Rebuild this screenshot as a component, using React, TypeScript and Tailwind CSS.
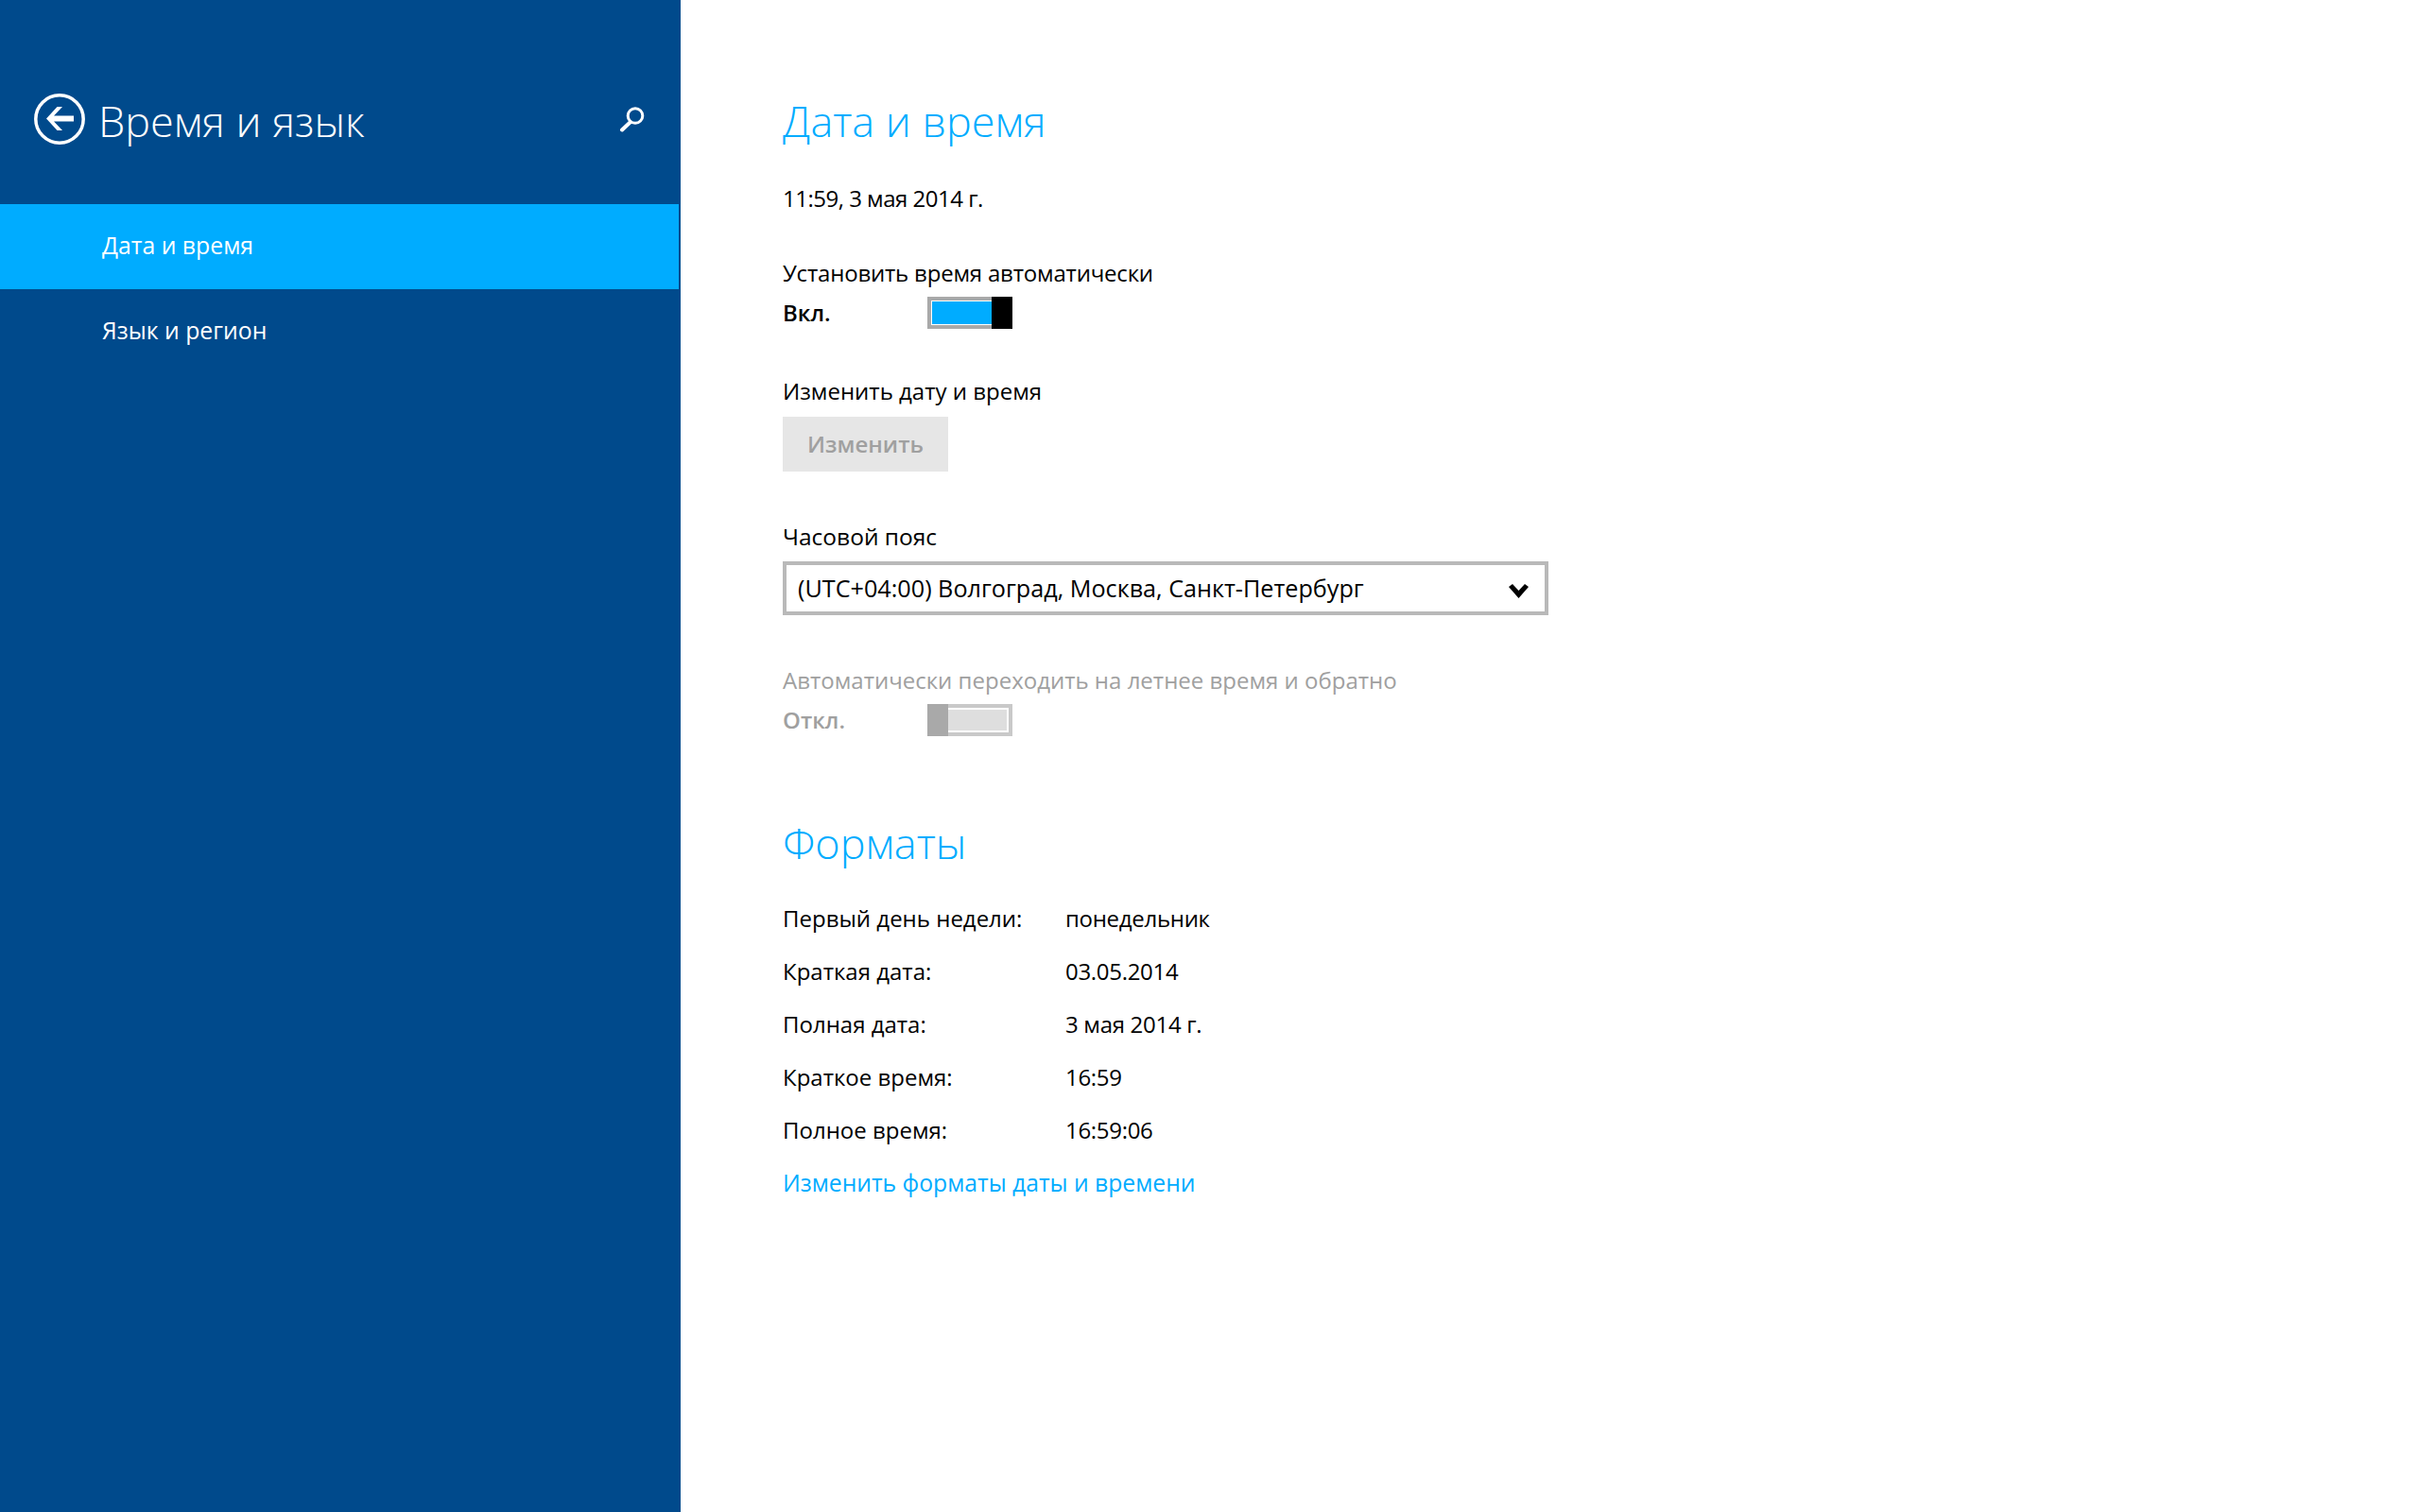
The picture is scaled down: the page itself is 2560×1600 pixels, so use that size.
function BackIcon() {
  return (
    <svg width="54" height="54" viewBox="0 0 54 54" fill="none">
      <circle cx="27" cy="27" r="25.2" stroke="white" strokeWidth="3.5" />
      <polygon fill="white" points="13,26.5 24.5,14 30,14 21,23.5 42,23.5 42,29.5 21,29.5 30,39 24.5,39" />
    </svg>
  );
}

function SearchIcon() {
  return (
    <svg width="28" height="28" viewBox="0 0 28 28" fill="none" stroke="white" strokeWidth="3">
      <circle cx="18" cy="10.5" r="7.8" />
      <path d="M12.5 17.5L4 25.5" strokeWidth="4" strokeLinecap="round" />
    </svg>
  );
}

function Toggle({ on }: { on: boolean }) {
  if (on) {
    return (
      <div className="flex h-[34px] w-[90px]">
        <div className="flex-1 border-[4px] border-r-0 border-[#a9a9a9] bg-white pt-[1px] pb-[1px] pl-[1px]">
          <div className="h-full bg-[#00acff]" />
        </div>
        <div className="w-[22px] bg-black" />
      </div>
    );
  }
  return (
    <div className="flex h-[34px] w-[90px]">
      <div className="w-[22px] bg-[#a9a9a9]" />
      <div className="flex-1 border-[4px] border-l-0 border-[#c9c9c9] bg-white pt-[2px] pb-[2px] pr-[2px]">
        <div className="h-full bg-[#dedede]" />
      </div>
    </div>
  );
}

const formats = [
  ["Первый день недели:", "понедельник"],
  ["Краткая дата:", "03.05.2014"],
  ["Полная дата:", "3 мая 2014 г."],
  ["Краткое время:", "16:59"],
  ["Полное время:", "16:59:06"],
];

export default function App() {
  return (
    <div className="flex h-screen overflow-hidden bg-white font-['Open_Sans',sans-serif] text-[24px] text-black">
      {/* left pane */}
      <div className="w-[720px] shrink-0 bg-[#004a8c] text-white">
        <div className="flex items-center pt-[99px] pl-[36px] pr-[38px]">
          <BackIcon />
          <div className="ml-[14px] pt-[4px] text-[45px] leading-[50px] font-light">Время и язык</div>
          <div className="ml-auto">
            <SearchIcon />
          </div>
        </div>
        <div className="mt-[63px] text-[24.8px]">
          <div className="mr-[2px] flex h-[90px] items-center bg-[#00acff] pb-[3px] pl-[108px]">Дата и время</div>
          <div className="flex h-[90px] items-center pb-[3px] pl-[108px]">Язык и регион</div>
        </div>
      </div>

      {/* right pane */}
      <div className="flex-1 pl-[108px] pt-[96px]">
        <div className="text-[45px] leading-[64px] font-light text-[#00acff]">Дата и время</div>
        <div className="mt-[22px] leading-[56px] tracking-[-0.5px]">11:59, 3 мая 2014 г.</div>

        <div className="mt-[23px] leading-[56px] tracking-[-0.2px]">Установить время автоматически</div>
        <div className="-mt-[3px] flex h-[34px] items-center">
          <div className="w-[153px] font-semibold">Вкл.</div>
          <Toggle on />
        </div>

        <div className="mt-[38px] -mb-[1px] leading-[56px]">Изменить дату и время</div>
        <div className="flex h-[58px] w-[175px] items-center justify-center bg-[#e6e6e6] font-semibold text-[#a0a0a0]">
          Изменить
        </div>

        <div className="mt-[41px] -mb-[2px] text-[24.5px] leading-[56px]">Часовой пояс</div>
        <div className="flex h-[57px] w-[810px] items-center justify-between border-[4px] border-[#b9b9b9] pl-[12px] pr-[17px]">
          <span className="text-[25.2px]">(UTC+04:00) Волгоград, Москва, Санкт-Петербург</span>
          <svg className="mt-[6px]" width="21" height="15" viewBox="0 0 21 15" fill="black">
            <polygon points="0,3 4,0 10.5,7 17,0 21,3 10.5,15" />
          </svg>
        </div>

        <div className="mt-[41px] leading-[56px] text-[#a0a0a0]">Автоматически переходить на летнее время и обратно</div>
        <div className="-mt-[3px] flex h-[34px] items-center">
          <div className="w-[153px] font-semibold text-[#a0a0a0]">Откл.</div>
          <Toggle on={false} />
        </div>

        <div className="mt-[81px] text-[45px] leading-[64px] font-light text-[#00acff]">Форматы</div>
        <div className="mt-[20px]">
          {formats.map(([label, value]) => (
            <div key={label} className="flex leading-[56px]">
              <div className="w-[299px]">{label}</div>
              <div className="tracking-[-0.3px]">{value}</div>
            </div>
          ))}
        </div>
        <div className="text-[24.7px] leading-[56px] text-[#00acff]">Изменить форматы даты и времени</div>
      </div>
    </div>
  );
}
